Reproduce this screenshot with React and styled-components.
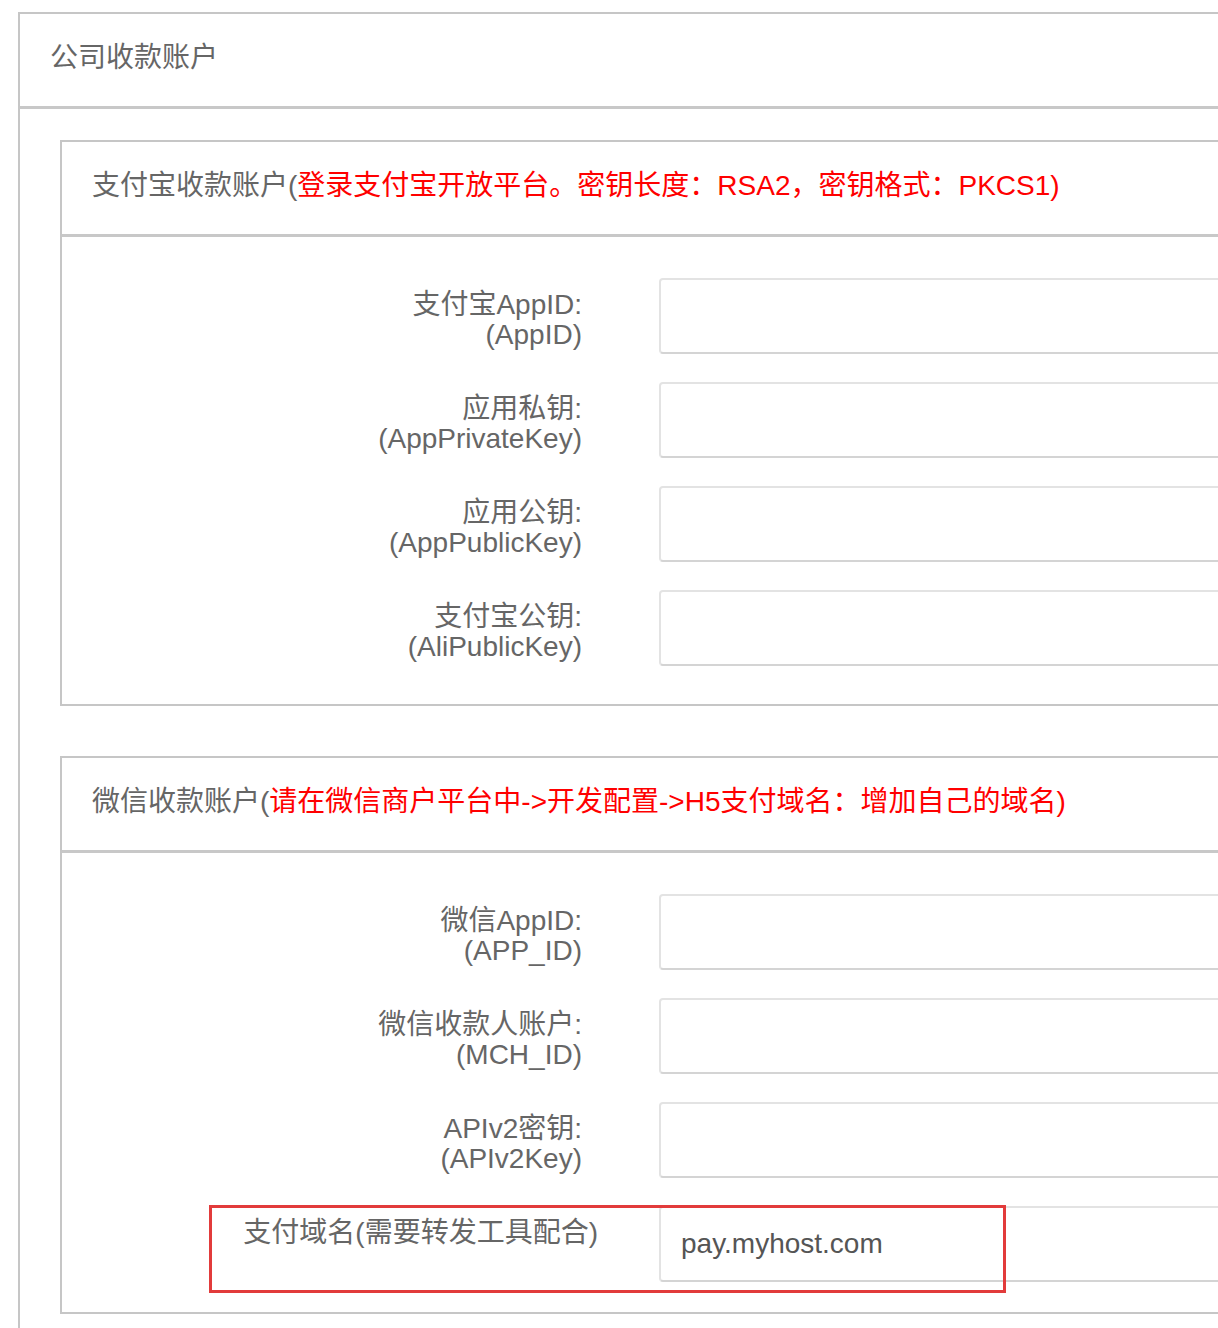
import React from "react"
import styled, { createGlobalStyle } from "styled-components"

const GlobalStyle = createGlobalStyle`
  html, body {
    margin: 0;
    overflow: hidden;
    background: #fff;
  }
  body {
    padding: 12px 0 0 18px;
    font-family: "Liberation Sans", "Noto Sans CJK SC", sans-serif;
    color: #666;
  }
`

const Panel = styled.section`
  width: ${props => (props.outer ? "1300px" : "1240px")};
  border: 2px solid #c6c6c6;
  border-right: none;
  border-bottom: ${props => (props.outer ? "none" : "2px solid #c6c6c6")};
  margin-top: ${props => (props.spaced ? "50px" : "0")};
  box-sizing: border-box;
  min-height: ${props => (props.outer ? "1320px" : "0")};
`

const PanelHeading = styled.header`
  height: 95px;
  box-sizing: border-box;
  padding: 0 30px 10px;
  display: flex;
  align-items: center;
  border-bottom: 3px solid #c8c8c8;
  font-size: 28px;
  color: #666;
  white-space: nowrap;
`

const Hint = styled.span`
  color: #f00;
`

const OuterBody = styled.div`
  padding: 31px 0 0 40px;
`

const FormBody = styled.div`
  padding: 41px 0 ${props => (props.tight ? "30px" : "38px")};
  display: flex;
  flex-direction: column;
  gap: 28px;
`

const Row = styled.div`
  position: relative;
  display: grid;
  grid-template-columns: 520px 1fr;
  column-gap: 77px;
`

const Label = styled.label`
  padding-top: 12px;
  text-align: right;
  font-size: 28px;
  line-height: 30px;
  color: #666;
  white-space: nowrap;
  margin-right: ${props => (props.wide ? "-16px" : "0")};

  span {
    display: block;
  }
`

const Input = styled.input`
  height: 76px;
  box-sizing: border-box;
  border: 2px solid #e3e3e3;
  border-bottom-color: #d4d4d4;
  border-radius: 4px;
  padding: 0 20px;
  font-family: "Liberation Sans", "Noto Sans CJK SC", sans-serif;
  font-size: 28px;
  color: #555;
  background: #fff;
  outline: none;
`

const Highlight = styled.div`
  position: absolute;
  left: 147px;
  top: -1px;
  width: 797px;
  height: 88px;
  box-sizing: border-box;
  border: 3px solid #e23b3b;
  pointer-events: none;
`

const alipayFields = [
  ["支付宝AppID:", "(AppID)"],
  ["应用私钥:", "(AppPrivateKey)"],
  ["应用公钥:", "(AppPublicKey)"],
  ["支付宝公钥:", "(AliPublicKey)"]
]

const wechatFields = [
  ["微信AppID:", "(APP_ID)"],
  ["微信收款人账户:", "(MCH_ID)"],
  ["APIv2密钥:", "(APIv2Key)"]
]

const Field = ({ name, code }) => (
  <Row>
    <Label>
      <span>{name}</span>
      <span>{code}</span>
    </Label>
    <Input type="text" />
  </Row>
)

const App = () => (
  <>
    <GlobalStyle />
    <Panel outer>
      <PanelHeading>公司收款账户</PanelHeading>
      <OuterBody>
        <Panel>
          <PanelHeading>
            支付宝收款账户(<Hint>登录支付宝开放平台。密钥长度：RSA2，密钥格式：PKCS1)</Hint>
          </PanelHeading>
          <FormBody>
            {alipayFields.map(([name, code]) => (
              <Field key={code} name={name} code={code} />
            ))}
          </FormBody>
        </Panel>
        <Panel spaced>
          <PanelHeading>
            微信收款账户(<Hint>请在微信商户平台中-&gt;开发配置-&gt;H5支付域名：增加自己的域名)</Hint>
          </PanelHeading>
          <FormBody tight>
            {wechatFields.map(([name, code]) => (
              <Field key={code} name={name} code={code} />
            ))}
            <Row>
              <Label wide>支付域名(需要转发工具配合)</Label>
              <Input type="text" defaultValue="pay.myhost.com" />
              <Highlight />
            </Row>
          </FormBody>
        </Panel>
      </OuterBody>
    </Panel>
  </>
)

export default App
